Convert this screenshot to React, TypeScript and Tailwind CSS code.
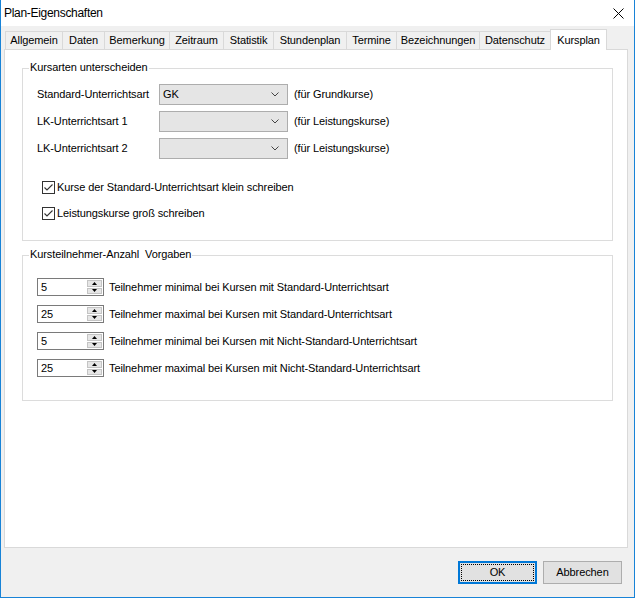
import React from 'react'

const tabs = [
  { label: 'Allgemein', w: 'w-[58px]' },
  { label: 'Daten', w: 'w-[43px]' },
  { label: 'Bemerkung', w: 'w-[66px]' },
  { label: 'Zeitraum', w: 'w-[55px]' },
  { label: 'Statistik', w: 'w-[51px]' },
  { label: 'Stundenplan', w: 'w-[74px]' },
  { label: 'Termine', w: 'w-[51px]' },
  { label: 'Bezeichnungen', w: 'w-[84px]' },
  { label: 'Datenschutz', w: 'w-[72px]' },
  { label: 'Kursplan', w: 'w-[57px]', active: true },
]

function Combo({ value }: { value?: string }) {
  return (
    <div className="w-[129px] h-[21px] border border-[#adadad] bg-[#e5e5e5] flex items-center justify-between pl-[3px] pr-[8px]">
      <span>{value}</span>
      <svg width="8" height="5" viewBox="0 0 8 5">
        <path d="M0.5 0.5 L4 4 L7.5 0.5" fill="none" stroke="#444" strokeWidth="1" />
      </svg>
    </div>
  )
}

function Check({ label }: { label: string }) {
  return (
    <div className="flex items-center h-[13px] ml-[5px] gap-[2px]">
      <svg width="13" height="13" viewBox="0 0 13 13">
        <rect x="0.5" y="0.5" width="12" height="12" fill="#fff" stroke="#333" />
        <path d="M2.5 6.5 L5 9 L10.5 3.5" fill="none" stroke="#333" strokeWidth="1.1" />
      </svg>
      <span>{label}</span>
    </div>
  )
}

function Spin({ value, label }: { value: string; label: string }) {
  return (
    <div className="flex items-center gap-[5px]">
      <div className="w-[67px] h-[18px] border border-[#7a7a7a] bg-white flex">
        <div className="flex-1 pl-[3px] leading-[16px]">{value}</div>
        <div className="w-[17px] flex flex-col gap-px p-px">
          <div className="flex-1 bg-[#e6e6e6] border border-[#c4c4c4] flex items-center justify-center">
            <svg width="5" height="3" viewBox="0 0 5 3"><path d="M0 3 L2.5 0 L5 3 Z" fill="#000" /></svg>
          </div>
          <div className="flex-1 bg-[#e6e6e6] border border-[#c4c4c4] flex items-center justify-center">
            <svg width="5" height="3" viewBox="0 0 5 3"><path d="M0 0 L2.5 3 L5 0 Z" fill="#000" /></svg>
          </div>
        </div>
      </div>
      <span>{label}</span>
    </div>
  )
}

function Group({ title, className, children }: { title: string; className: string; children: React.ReactNode }) {
  return (
    <div className={`relative border border-[#dcdcdc] ml-[17px] mr-[14px] ${className}`}>
      <span className="absolute -top-[8px] left-[6px] px-px bg-white leading-[13px] whitespace-pre">{title}</span>
      {children}
    </div>
  )
}

export default function App() {
  return (
    <div className="w-[635px] h-[598px] flex flex-col bg-white border-x border-b border-[#1883d7] font-['Liberation_Sans',Arial,sans-serif] text-[11px] text-black tracking-[-0.1px]">
      {/* Title bar */}
      <div className="h-[26px] flex items-center justify-between pl-[3px] pr-[10px]">
        <span className="text-[12px] tracking-[-0.3px]">Plan-Eigenschaften</span>
        <svg width="11" height="11" viewBox="0 0 11 11">
          <path d="M0.5 0.5 L10.5 10.5 M10.5 0.5 L0.5 10.5" stroke="#000" strokeWidth="1" />
        </svg>
      </div>

      <div className="flex-1 bg-[#f0f0f0] flex flex-col pt-[3px] pl-[3px] pr-[6px]">
        {/* Tabs */}
        <div className="h-[20px] flex items-end pl-px">
          {tabs.map((t, i) => (
            <div
              key={t.label}
              className={
                t.active
                  ? `${t.w} h-[21px] -mb-px relative z-10 bg-white border border-b-0 border-[#d9d9d9] -ml-px flex items-start justify-center pt-[2px]`
                  : `${t.w} h-[18px] bg-[#f0f0f0] border border-b-0 border-[#d9d9d9] ${i > 0 ? '-ml-px' : ''} flex items-center justify-center`
              }
            >
              {t.label}
            </div>
          ))}
        </div>

        {/* Panel */}
        <div className="h-[499px] border border-[#d9d9d9] bg-white flex flex-col">
          <Group title="Kursarten unterscheiden" className="mt-[18px] h-[173px] pt-[15px] pl-[14px]">
            <div className="flex flex-col gap-[6px]">
              <div className="flex items-center h-[21px]">
                <span className="w-[122px]">Standard-Unterrichtsart</span>
                <Combo value="GK" />
                <span className="ml-[6px]">(für Grundkurse)</span>
              </div>
              <div className="flex items-center h-[21px]">
                <span className="w-[122px]">LK-Unterrichtsart 1</span>
                <Combo />
                <span className="ml-[6px]">(für Leistungskurse)</span>
              </div>
              <div className="flex items-center h-[21px]">
                <span className="w-[122px]">LK-Unterrichtsart 2</span>
                <Combo />
                <span className="ml-[6px]">(für Leistungskurse)</span>
              </div>
            </div>
            <div className="flex flex-col gap-[13px] mt-[22px]">
              <Check label="Kurse der Standard-Unterrichtsart klein schreiben" />
              <Check label="Leistungskurse groß schreiben" />
            </div>
          </Group>

          <Group title="Kursteilnehmer-Anzahl  Vorgaben" className="mt-[14px] h-[146px] pt-[22px] pl-[14px]">
            <div className="flex flex-col gap-[9px]">
              <Spin value="5" label="Teilnehmer minimal bei Kursen mit Standard-Unterrichtsart" />
              <Spin value="25" label="Teilnehmer maximal bei Kursen mit Standard-Unterrichtsart" />
              <Spin value="5" label="Teilnehmer minimal bei Kursen mit Nicht-Standard-Unterrichtsart" />
              <Spin value="25" label="Teilnehmer maximal bei Kursen mit Nicht-Standard-Unterrichtsart" />
            </div>
          </Group>
        </div>

        {/* Buttons */}
        <div className="flex justify-end gap-[6px] mt-[13px] mr-[6px]">
          <button className="w-[79px] h-[23px] border-2 border-[#0078d7] bg-[#e1e1e1] p-px">
            <div className="w-full h-full border border-dotted border-black flex items-center justify-center">OK</div>
          </button>
          <button className="w-[79px] h-[23px] border border-[#adadad] bg-[#e1e1e1] flex items-center justify-center">
            Abbrechen
          </button>
        </div>
      </div>
    </div>
  )
}
